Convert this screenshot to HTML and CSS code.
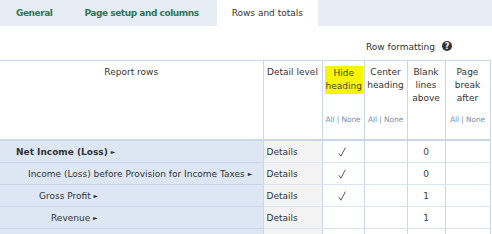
FILE: index.html
```html
<!DOCTYPE html>
<html>
<head>
<meta charset="utf-8">
<link rel="stylesheet" href="styles.css">
</head>
<body>
<div class="tabs">
  <div class="tab">General</div>
  <div class="tab">Page setup and columns</div>
  <div class="tab active">Rows and totals</div>
</div>
<div class="caption">Row formatting <span class="help">?</span></div>
<table class="grid">
  <colgroup>
    <col class="c-rows"><col class="c-detail"><col class="c-hide"><col class="c-center"><col class="c-blank"><col class="c-page">
  </colgroup>
  <thead>
    <tr class="labels">
      <th rowspan="2" class="h-rows">Report rows</th>
      <th rowspan="2" class="h-detail">Detail level</th>
      <th><span class="hl">Hide heading</span></th>
      <th>Center heading</th>
      <th>Blank lines above</th>
      <th>Page break after</th>
    </tr>
    <tr class="links">
      <th><a>All</a> | <a>None</a></th>
      <th><a>All</a> | <a>None</a></th>
      <th></th>
      <th><a>All</a> | <a>None</a></th>
    </tr>
  </thead>
  <tbody>
    <tr>
      <td class="name lvl0"><b>Net Income (Loss)</b> <span class="arr">&#9658;</span></td>
      <td class="det">Details</td>
      <td class="mid"><svg class="chk" width="8" height="10" viewBox="0 0 8 10"><path d="M0.8 6.2 L2.9 9.2 L7.4 0.6" fill="none" stroke="#444" stroke-width="0.9"/></svg></td>
      <td></td>
      <td class="mid">0</td>
      <td></td>
    </tr>
    <tr>
      <td class="name lvl1">Income (Loss) before Provision for Income Taxes <span class="arr">&#9658;</span></td>
      <td class="det">Details</td>
      <td class="mid"><svg class="chk" width="8" height="10" viewBox="0 0 8 10"><path d="M0.8 6.2 L2.9 9.2 L7.4 0.6" fill="none" stroke="#444" stroke-width="0.9"/></svg></td>
      <td></td>
      <td class="mid">0</td>
      <td></td>
    </tr>
    <tr>
      <td class="name lvl2">Gross Profit <span class="arr">&#9658;</span></td>
      <td class="det">Details</td>
      <td class="mid"><svg class="chk" width="8" height="10" viewBox="0 0 8 10"><path d="M0.8 6.2 L2.9 9.2 L7.4 0.6" fill="none" stroke="#444" stroke-width="0.9"/></svg></td>
      <td></td>
      <td class="mid">1</td>
      <td></td>
    </tr>
    <tr>
      <td class="name lvl3">Revenue <span class="arr">&#9658;</span></td>
      <td class="det">Details</td>
      <td class="mid"></td>
      <td></td>
      <td class="mid">1</td>
      <td></td>
    </tr>
    <tr>
      <td class="name"></td>
      <td class="det"></td>
      <td></td><td></td><td></td><td></td>
    </tr>
  </tbody>
</table>
</body>
</html>
```
FILE: styles.css
```css
html, body {
  margin: 0;
  padding: 0;
  background: #ffffff;
  overflow: hidden;
}
body {
  font-family: "DejaVu Sans", Verdana, sans-serif;
  font-size: 9px;
  color: #333333;
  width: 492px;
  height: 234px;
}
.tabs {
  display: flex;
  height: 26px;
  background: #e7edf4;
  align-items: stretch;
}
.tab {
  display: flex;
  align-items: center;
  padding: 0 16px;
  color: #2f7657;
  font-weight: bold;
  font-size: 9px;
  letter-spacing: -0.45px;
}
.tab.active {
  background: #ffffff;
  color: #333333;
  font-weight: normal;
  letter-spacing: 0;
  padding: 0 15px;
  margin-left: 2px;
}
.caption {
  display: flex;
  justify-content: flex-end;
  align-items: flex-end;
  gap: 7px;
  height: 34px;
  padding-right: 40px;
  padding-bottom: 8px;
  box-sizing: border-box;
}
.help {
  display: inline-flex;
  align-items: center;
  justify-content: center;
  width: 10px;
  height: 10px;
  border-radius: 50%;
  background: #333333;
  color: #ffffff;
  font-size: 8px;
  font-weight: bold;
  margin-bottom: 1px;
}
.grid {
  border-collapse: collapse;
  table-layout: fixed;
  width: 490px;
}
.c-rows { width: 263px; }
.c-detail { width: 59px; }
.c-hide { width: 42px; }
.c-center { width: 43px; }
.c-blank { width: 38px; }
.c-page { width: 45px; }
.grid th {
  font-weight: normal;
  text-align: center;
  vertical-align: top;
  border-left: 1px solid #c9d7e7;
  border-right: 1px solid #c9d7e7;
  line-height: 13px;
  padding: 0 2px;
}
.grid thead tr.labels th {
  border-top: 1px solid #c9d7e7;
  height: 44px;
  padding-top: 5px;
}
.grid thead th.h-rows {
  border-left: none;
  padding-top: 11px;
  border-bottom: 2px solid #c9d7e7;
}
.grid thead th.h-detail {
  padding-top: 8px;
  border-bottom: 2px solid #c9d7e7;
}
.grid thead tr.links th {
  height: 26px;
  padding: 3px 0 0;
  border-bottom: 2px solid #c9d7e7;
  font-size: 7.5px;
  color: #7b8fb0;
  white-space: nowrap;
  letter-spacing: -0.1px;
}
.hl {
  background: #f6f600;
  color: #4a4a20;
  display: inline-block;
  padding: 1px 1px;
}
.grid td {
  height: 21px;
  border-bottom: 1px solid #dce5ef;
  border-left: 1px solid #c9d7e7;
  border-right: 1px solid #c9d7e7;
  padding: 0 3px;
  vertical-align: middle;
}
.grid td.name {
  background: #dde7f3;
  border-left: none;
  border-bottom: 1px solid #c8d6e6;
  white-space: nowrap;
}
.grid td.det {
  background: #f3f3f3;
}
.grid td.mid {
  text-align: center;
  color: #444444;
}
.chk {
  display: inline-block;
  vertical-align: middle;
  margin-right: 2px;
}
.lvl0 { padding-left: 16px !important; }
.lvl1 { padding-left: 28px !important; }
.lvl2 { padding-left: 39px !important; }
.lvl3 { padding-left: 51px !important; }
.arr {
  font-size: 6px;
  vertical-align: 1px;
}
```
